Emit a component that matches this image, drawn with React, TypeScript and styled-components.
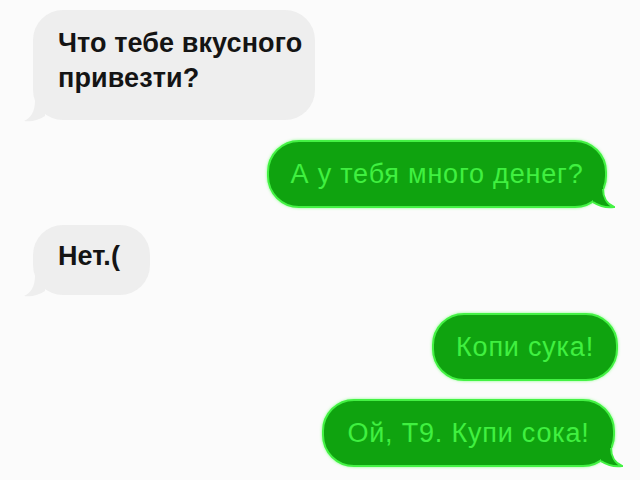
import React from 'react';
import styled, { createGlobalStyle } from 'styled-components';

const GlobalStyle = createGlobalStyle`
  html, body {
    margin: 0;
    padding: 0;
    background: #fbfbfb;
  }
  body {
    width: 640px;
    height: 480px;
    overflow: hidden;
    font-family: "Liberation Sans", Arial, sans-serif;
  }
`;

const Chat = styled.div`
  display: flex;
  flex-direction: column;
  width: 640px;
  height: 480px;
  box-sizing: border-box;
`;

const Row = styled.div<{ $out?: boolean; $top: number; $side: number }>`
  display: flex;
  justify-content: ${p => (p.$out ? 'flex-end' : 'flex-start')};
  margin-top: ${p => p.$top}px;
  padding-left: ${p => (p.$out ? 0 : p.$side)}px;
  padding-right: ${p => (p.$out ? p.$side : 0)}px;
`;

const GrayBubble = styled.div<{ $w: number; $h: number }>`
  position: relative;
  box-sizing: border-box;
  width: ${p => p.$w}px;
  height: ${p => p.$h}px;
  padding: 0 18px 8px 25px;
  display: flex;
  flex-direction: column;
  justify-content: center;
  background: #eeeeee;
  border-radius: 30px;
  color: #141414;
  font-size: 27px;
  line-height: 35px;
  font-weight: 700;
  letter-spacing: 0.1px;
  white-space: nowrap;
`;

const GreenBubble = styled.div<{ $w: number }>`
  position: relative;
  box-sizing: border-box;
  width: ${p => p.$w}px;
  height: 68px;
  display: flex;
  align-items: center;
  justify-content: center;
  background: #0fa30f;
  border: 2px solid #44f244;
  box-shadow: 0 0 3px rgba(80, 255, 80, 0.7);
  border-radius: 32px;
  color: #40f040;
  font-size: 27px;
  letter-spacing: 0.8px;
  white-space: nowrap;
`;

const Tail = styled.svg<{ $out?: boolean }>`
  position: absolute;
  bottom: -3px;
  width: 22px;
  height: 22px;
  ${p => (p.$out ? 'right: -10px;' : 'left: -10px; transform: scaleX(-1);')}
`;

const BubbleTail: React.FC<{ out?: boolean }> = ({ out }) => (
  <Tail $out={out} viewBox="0 0 22 22">
    <path
      d="M0 0 L10 0 C10 10 14 17 21 20 C13 21 6 19 0 15 Z"
      fill={out ? '#0fa30f' : '#eeeeee'}
    />
    {out && (
      <path
        d="M10 2 C10 10 14 17 21 20 C13 21 6 19 0 15"
        fill="none"
        stroke="#44f244"
        strokeWidth="2"
      />
    )}
  </Tail>
);

export default function App() {
  return (
    <>
      <GlobalStyle />
      <Chat>
        <Row $top={10} $side={33}>
          <GrayBubble $w={282} $h={110}>
            <span>Что тебе вкусного</span>
            <span>привезти?</span>
            <BubbleTail />
          </GrayBubble>
        </Row>
        <Row $out $top={20} $side={33}>
          <GreenBubble $w={340}>
            А у тебя много денег?
            <BubbleTail out />
          </GreenBubble>
        </Row>
        <Row $top={17} $side={33}>
          <GrayBubble $w={117} $h={70}>
            <span>Нет.(</span>
            <BubbleTail />
          </GrayBubble>
        </Row>
        <Row $out $top={18} $side={22}>
          <GreenBubble $w={186}>Копи сука!</GreenBubble>
        </Row>
        <Row $out $top={18} $side={25}>
          <GreenBubble $w={293}>
            Ой, Т9. Купи сока!
            <BubbleTail out />
          </GreenBubble>
        </Row>
      </Chat>
    </>
  );
}
